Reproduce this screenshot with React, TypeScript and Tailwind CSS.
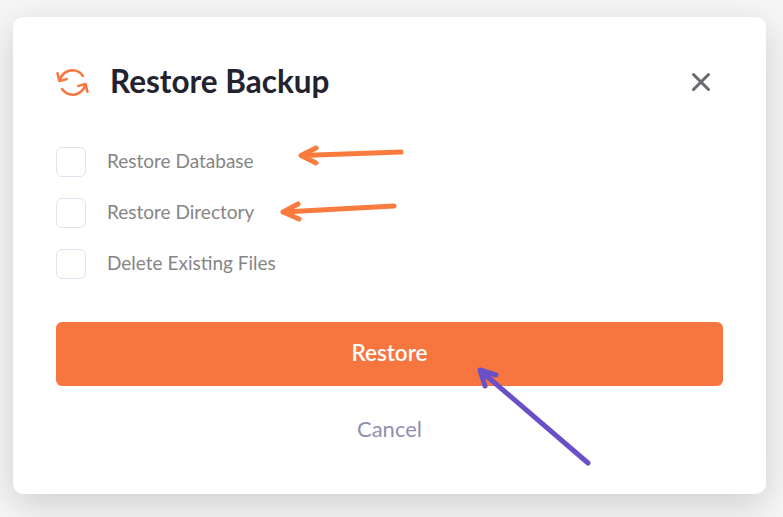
import React from 'react';
import { X } from 'lucide-react';

const options = ['Restore Database', 'Restore Directory', 'Delete Existing Files'];

const RestoreIcon = () => (
  <svg width="33" height="29" viewBox="0 0 34 30" fill="none" stroke="#f7763f" strokeWidth="2.6" strokeLinecap="round" strokeLinejoin="round">
    <path d="M1.5 5.5 L3.5 13.5 L11 11.5" />
    <path d="M3.8 13 C5 7 10.5 2.4 17 2.4 C21.5 2.4 25.5 4.8 27.8 8.2" />
    <path d="M32.5 24.5 L30.5 16.5 L23 18.5" />
    <path d="M30.2 17 C29 23 23.5 27.6 17 27.6 C12.5 27.6 8.5 25.2 6.2 21.8" />
  </svg>
);

const App: React.FC = () => {
  return (
    <div className="relative w-[783px] h-[517px] overflow-hidden bg-[#f6f6f6] pt-[17px] pl-[13px] font-['Lato','Noto_Sans',sans-serif]">
      <div className="w-[753px] h-[477px] bg-white rounded-[10px] shadow-[0_10px_36px_rgba(0,0,0,0.17)] pt-[47px] px-[43px]">
        {/* Header */}
        <div className="flex items-center justify-between h-[36px]">
          <div className="flex items-center gap-[21px]">
            <RestoreIcon />
            <h1 className="text-[31.5px] font-bold text-[#23232f] leading-none -mt-[1px]">Restore Backup</h1>
          </div>
          <button className="mr-[7px] text-[#666a6e]">
            <X className="h-[30px] w-[30px]" strokeWidth={2.4} />
          </button>
        </div>

        {/* Options */}
        <div className="mt-[47px] flex flex-col gap-[21px]">
          {options.map((label) => (
            <label key={label} className="flex items-center gap-[21px] h-[30px]">
              <span className="w-[30px] h-[30px] rounded-[6px] border border-[#e2e2f0] bg-white" />
              <span className="text-[19px] text-[#858585] -mt-[2px]">{label}</span>
            </label>
          ))}
        </div>

        <button className="mt-[43px] w-full h-[64px] rounded-[6px] bg-[#f7763f] text-white text-[22.5px] font-semibold pb-[2px]">
          Restore
        </button>
        <div className="mt-[28px] text-center text-[22px] leading-[30px] text-[#8f8fae]">Cancel</div>
      </div>

      {/* Annotation arrows */}
      <svg className="absolute left-0 top-0 pointer-events-none" width="783" height="517" fill="none" strokeLinecap="round" strokeLinejoin="round">
        <g stroke="#f97b3d" strokeWidth="5">
          <path d="M401 152 L302 155.5" />
          <path d="M316 148 L301 155.5 L316 163" />
          <path d="M394 206 L284 212" />
          <path d="M298 204 L283 212 L299 219" />
        </g>
        <g stroke="#6a4fc9" strokeWidth="5">
          <path d="M588 463 L482 372" />
          <path d="M496 375 L480 370 L485 386" />
        </g>
      </svg>
    </div>
  );
};

export default App;
